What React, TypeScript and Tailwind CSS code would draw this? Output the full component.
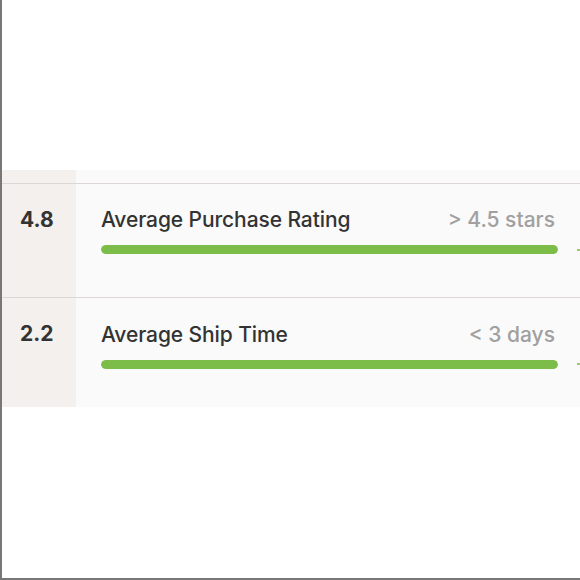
const rows = [
  { score: '4.8', label: 'Average Purchase Rating', goal: '> 4.5 stars', value: 100 },
  { score: '2.2', label: 'Average Ship Time', goal: '< 3 days', value: 100 },
];

function Bar({ value }: { value: number }) {
  return (
    <div className="h-[9px] rounded-full bg-[#ececec] overflow-hidden">
      <div className="h-full rounded-full bg-[#7cbd4a]" style={{ width: `${value}%` }} />
    </div>
  );
}

export default function App() {
  return (
    <div
      className="w-[580px] h-[580px] bg-white border-l-2 border-b-2 border-[#777] flex flex-col overflow-hidden"
      style={{ fontFamily: 'Inter, "Open Sans", sans-serif' }}
    >
      <div className="h-[170px]" />
      <div className="flex">
        <div className="w-[74px] bg-[#f3f0ed] h-[13px]" />
        <div className="flex-1 bg-[#fafafa]" />
      </div>
      {rows.map((row, i) => (
        <div key={i} className="flex border-t-[1.5px] border-[#dcd6d6]">
          <div className="w-[74px] bg-[#f3f0ed] pt-[25px] pl-[18px] text-[21px] font-bold text-[#333] leading-none">
            {row.score}
          </div>
          <div
            className={
              i === 0
                ? 'flex-1 bg-[#fafafa] pl-[25px] pr-[22px] pt-[25px] pb-[43px] relative'
                : 'flex-1 bg-[#fafafa] pl-[25px] pr-[22px] pt-[26px] pb-[38px] relative'
            }
          >
            <div className="flex items-center justify-between leading-none pr-[3px]">
              <span className="text-[21px] font-medium text-[#333] tracking-[-0.1px]">{row.label}</span>
              <span className="text-[21px] font-medium text-[#a0a0a0]">{row.goal}</span>
            </div>
            <div className="mt-[15px]">
              <Bar value={row.value} />
            </div>
            <div className="absolute right-0 top-[65px] w-[3px] h-[2px] bg-[#9cc96f]" />
          </div>
        </div>
      ))}
      <div className="flex-1" />
    </div>
  );
}
